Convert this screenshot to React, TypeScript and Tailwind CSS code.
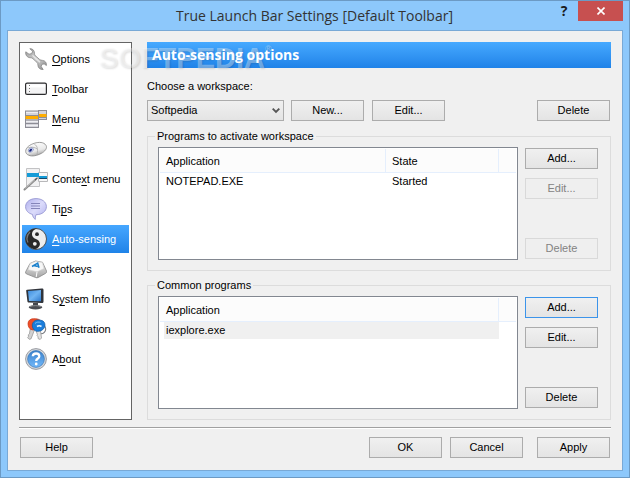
import React, { useState } from "react";
import clsx from "clsx";

interface NavItem {
  id: string;
  before: string;
  hotkey: string;
  after: string;
  icon: React.ReactNode;
}

const OptionsIcon = () => (
  <svg viewBox="0 0 22 22" className="h-[22px] w-[22px] shrink-0">
    <defs>
      <linearGradient id="steel" x1="0" y1="0" x2="1" y2="1">
        <stop offset="0" stopColor="#9b9b9b" />
        <stop offset="0.5" stopColor="#d2d2d2" />
        <stop offset="1" stopColor="#8a8a8a" />
      </linearGradient>
    </defs>
    <path
      d="M4.8.7 7.6 3.2 6.7 5.6 4 6.2.8 3.8C.2 7 2.2 9.6 5.2 9.7c1.2 0 1.9.2 2.7 1l4.2 3.8c.6.6.8 1.3.8 2.4.1 3 2.2 4.9 5.3 4.6l-2-2.9.7-2.3 2.3-.4 2.2 1.6c.4-2.6-1.2-4.9-3.9-5.1-1.3-.1-2.2-.3-3.1-1.100L10.200 7.600C9.600 7 9.500 6.300 9.500 5.400 9.400 2.300 7.600.5 4.800.7z"
      fill="url(#steel)"
      stroke="#858585"
      strokeWidth="0.8"
    />
    <path d="M7.5 7.4 15 14.3" stroke="#e9e9e9" strokeWidth="1.2" />
  </svg>
);

const ToolbarIcon = () => (
  <svg viewBox="0 0 22 22" className="h-[22px] w-[22px] shrink-0">
    <rect x="0.6" y="5.1" width="20.8" height="11.3" rx="1.5" fill="#f3f3f4" stroke="#2c2c2e" strokeWidth="1.2" />
    <path d="M1.8 6.4h18.4v3H1.8z" fill="#fff" />
    <path d="M4.5 7v8" stroke="#777" strokeDasharray="1 2" />
  </svg>
);

const MenuIcon = () => (
  <svg viewBox="0 0 22 22" className="h-[22px] w-[22px] shrink-0">
    <rect x="0.5" y="3" width="13" height="16.5" fill="#d4d4da" stroke="#8d8d96" />
    <path d="M1 7.500h12M1 12h12M1 15.500h12" stroke="#8d8d96" />
    <path d="M1 4.500h12M1 13.500h12M1 17.500h12" stroke="#efeff3" />
    <rect x="0.5" y="8" width="13" height="3" fill="#ffad00" />
    <rect x="13.5" y="2.5" width="8" height="9" fill="#d4d4da" stroke="#8d8d96" />
    <path d="M14 9.500h7" stroke="#8d8d96" />
    <rect x="14" y="6" width="7.5" height="3" fill="#ffad00" />
  </svg>
);

const MouseIcon = () => (
  <svg viewBox="0 0 22 22" className="h-[22px] w-[22px] shrink-0">
    <defs>
      <linearGradient id="shell" x1="0.3" y1="0" x2="0.7" y2="1">
        <stop offset="0" stopColor="#fff" />
        <stop offset="0.6" stopColor="#e9e9e9" />
        <stop offset="1" stopColor="#999" />
      </linearGradient>
    </defs>
    <path
      d="M.7 13.500C.5 9.500 5 6.600 9.500 5.200c4.300-1.300 9.300-1.300 11.500 2.100 1.700 3-1.300 6.300-4.700 8.100-3.800 2-9.300 3.500-12.600 1.800C1.900 16.500.8 15.300.7 13.500z"
      fill="url(#shell)"
      stroke="#858585"
      strokeWidth="0.8"
    />
    <path d="M8.500 5.700c3.300 1.200 5 4.700 3.500 10.800M2.500 10c4-1.500 7-.9 9.800 1" fill="none" stroke="#aaa" strokeWidth="0.8" />
    <ellipse cx="5.800" cy="12" rx="2.800" ry="2" fill="#cbd5f4" stroke="#6a78aa" strokeWidth="0.5" transform="rotate(-30 5.8 12)" />
    <ellipse cx="5.600" cy="12.200" rx="1" ry="1.700" fill="#111c79" transform="rotate(45 5.6 12.2)" />
  </svg>
);

const ContextIcon = () => (
  <svg viewBox="0 0 22 22" className="h-[22px] w-[22px] shrink-0 overflow-visible">
    <path d="M1.500.5h13v18h-13z" fill="#f1f1f2" stroke="#c2c2c4" />
    <path d="M13.500 4.500h9v9h-9z" fill="#f8f8f8" stroke="#b8b8ba" />
    <path d="M2 5h12v4H2zM14 8h8v2.500h-8z" fill="#159bd7" />
    <path d="M14 10.500h8" stroke="#174a6b" />
    <path d="M-.5 21.500 10.500 11.500" stroke="#8b8b8b" strokeWidth="2" strokeLinecap="round" />
    <path d="m10 12 2.500-2.200" stroke="#555" strokeWidth="1.2" />
    <path d="m0 20.500 10-9" stroke="#d8d8d8" strokeWidth="0.6" />
  </svg>
);

const TipsIcon = () => (
  <svg viewBox="0 0 22 22" className="h-[22px] w-[22px] shrink-0">
    <defs>
      <linearGradient id="bubble" x1="0" y1="0" x2="1" y2="1">
        <stop offset="0" stopColor="#b0b0ec" />
        <stop offset="0.5" stopColor="#dcdcfb" />
        <stop offset="1" stopColor="#b1b1ee" />
      </linearGradient>
    </defs>
    <path
      d="M11 .6C5 .6.6 4 .6 8.700c0 3.800 2.800 6.700 6.900 7.700.2 2.200 1.100 3.800 2.800 5-.2-1.700 0-3.200.7-4.700 6 0 10.400-3.400 10.400-8C21.400 4 17 .6 11 .6z"
      fill="url(#bubble)"
      stroke="#9998d3"
      strokeWidth="0.9"
    />
    <path d="M6 5.500h9M6 8h9M6 10.500h9" stroke="#8585b9" />
  </svg>
);

const SensingIcon = () => (
  <svg viewBox="0 0 22 22" className="h-[22px] w-[22px] shrink-0">
    <circle cx="11" cy="11" r="10.5" fill="#ededed" stroke="#444" strokeWidth="0.9" />
    <path d="M13 .8A10.300 10.300 0 1 0 8.500 21c3.600.3 6.300-1.900 6.400-5 .1-2.600-1.800-4-4-5C8.200 9.900 6.800 8.300 7 5.800 7.300 2.800 9.700.8 13 .8z" fill="#292929" />
    <path d="M5 4C1.600 7.300 1.500 11.500 3 14.500" fill="none" stroke="#777" strokeWidth="1.3" />
    <circle cx="12" cy="6.2" r="1.9" fill="#292929" />
    <circle cx="9.8" cy="15.8" r="1.9" fill="#f1f1f1" />
  </svg>
);

const HotkeysIcon = () => (
  <svg viewBox="0 0 22 22" className="h-[22px] w-[22px] shrink-0">
    <defs>
      <linearGradient id="key" x1="0" y1="0" x2="0" y2="1">
        <stop offset="0" stopColor="#f1f1f1" />
        <stop offset="1" stopColor="#a3a3a3" />
      </linearGradient>
    </defs>
    <path d="M5 5.500 10.500 3l7 1.300 4 8.700c.3 1.200-.1 1.800-1 2.400l-7.300 4.100c-.8.4-1.700.4-2.500.1L1.300 15.800c-.7-.4-.9-1-.7-1.900z" fill="url(#key)" stroke="#898989" strokeWidth="0.8" />
    <path d="M5.300 5.600 10.700 3.400l6.600 1.200 1.700 6-6.900 3.200-9-2.100z" fill="#f7f7f7" stroke="#d3d3d3" strokeWidth="0.6" />
    <path d="m12 14-.8 5" stroke="#fff" />
    <path d="m7 8.500 5.700-3.300 1.300 4.600M8.800 7.500l4 .9" fill="none" stroke="#187fcc" strokeWidth="1.5" />
  </svg>
);

const SystemIcon = () => (
  <svg viewBox="0 0 22 22" className="h-[22px] w-[22px] shrink-0">
    <defs>
      <linearGradient id="screen" x1="0" y1="0" x2="1" y2="1">
        <stop offset="0" stopColor="#3c8bdd" />
        <stop offset="0.5" stopColor="#70b4f2" />
        <stop offset="1" stopColor="#2e78cb" />
      </linearGradient>
    </defs>
    <path d="m2 1.700 14.500-1.200c1.300-.1 2 .3 2 1.500v11.500c0 1-.6 1.500-1.700 1.500L4 14.500c-1 0-1.500-.4-1.600-1.300L1.200 3c-.1-.8.1-1.200.8-1.300z" fill="#30343b" />
    <path d="M3 3 16 2v11.300L4 13z" fill="url(#screen)" />
    <path d="M8 15h5v3H8z" fill="#44474d" />
    <ellipse cx="10.5" cy="19.2" rx="6.8" ry="2.2" fill="#494c52" />
    <path d="M5 18.600c3-1.300 8-1.300 11 0" fill="none" stroke="#a3a5a9" strokeWidth="0.7" />
  </svg>
);

const KeysIcon = () => (
  <svg viewBox="0 0 22 22" className="h-[22px] w-[22px] shrink-0">
    <circle cx="16" cy="11" r="4.7" fill="none" stroke="#7b7e83" strokeWidth="1.1" />
    <path d="m5.200 11 4.300.9-3.500 9-1.800.4-1.600-1.600 1-1.500-.4-1.300 1.200-1z" fill="#d1d1d1" stroke="#8f8f8f" strokeWidth="0.7" />
    <path d="m11 12.500 4.300-1.200L16.500 20l-1.300 1.400-2-.7-.2-2-1-1 .4-1z" fill="#e3e3e3" stroke="#8f8f8f" strokeWidth="0.7" />
    <path d="M8.500.7C5.600.7 3 2.500 3 5.600 3 8.800 4.600 11.800 8 12l3.500-1.500L15 2.200C13.700 1 11 .6 8.500.7z" fill="#ef4e27" stroke="#c53417" strokeWidth="0.7" />
    <path d="M13 2C9.500 2 7 4.600 7.300 8c.3 2.700 2 4.700 4.500 5.300 2.800.4 6-.9 7.500-3.500 1.300-2.600.7-5.500-1.300-6.800C16.800 2.200 15 2 13 2z" fill="#1a7ddb" stroke="#0c59a5" strokeWidth="0.7" />
    <path d="M10 5.500c1.600-1.600 4-1.700 5.500-1" fill="none" stroke="#71bcf5" />
    <path d="M12 8.500c1.500-1 3-1 4.500 0" fill="none" stroke="#eef7ff" strokeWidth="1.7" />
  </svg>
);

const AboutIcon = () => (
  <svg viewBox="0 0 22 22" className="h-[22px] w-[22px] shrink-0">
    <defs>
      <linearGradient id="help" x1="0" y1="0" x2="0" y2="1">
        <stop offset="0" stopColor="#3b82cd" />
        <stop offset="1" stopColor="#71b8fa" />
      </linearGradient>
    </defs>
    <circle cx="11" cy="11" r="10.4" fill="#d9dbdf" stroke="#8e9299" strokeWidth="0.9" />
    <circle cx="11" cy="11" r="8.4" fill="url(#help)" stroke="#3e78b5" strokeWidth="0.7" />
    <path d="M7.800 8.200c.2-3.600 6.500-3.600 6.500 0 0 2.300-3.100 2.300-3.100 4.700" fill="none" stroke="#fff" strokeWidth="2.3" />
    <circle cx="11.2" cy="16" r="1.4" fill="#fff" />
  </svg>
);

const navItems: NavItem[] = [
  { id: "options", before: "", hotkey: "O", after: "ptions", icon: <OptionsIcon /> },
  { id: "toolbar", before: "", hotkey: "T", after: "oolbar", icon: <ToolbarIcon /> },
  { id: "menu", before: "", hotkey: "M", after: "enu", icon: <MenuIcon /> },
  { id: "mouse", before: "Mo", hotkey: "u", after: "se", icon: <MouseIcon /> },
  { id: "context", before: "Conte", hotkey: "x", after: "t menu", icon: <ContextIcon /> },
  { id: "tips", before: "Ti", hotkey: "p", after: "s", icon: <TipsIcon /> },
  { id: "sensing", before: "", hotkey: "A", after: "uto-sensing", icon: <SensingIcon /> },
  { id: "hotkeys", before: "", hotkey: "H", after: "otkeys", icon: <HotkeysIcon /> },
  { id: "system", before: "S", hotkey: "y", after: "stem Info", icon: <SystemIcon /> },
  { id: "registration", before: "", hotkey: "R", after: "egistration", icon: <KeysIcon /> },
  { id: "about", before: "A", hotkey: "b", after: "out", icon: <AboutIcon /> }
];

interface DialogButtonProps extends React.ButtonHTMLAttributes<HTMLButtonElement> {
  focused?: boolean;
}

function DialogButton({ focused, className, ...props }: DialogButtonProps) {
  return (
    <button
      type="button"
      className={clsx(
        "h-[21px] w-[73px] shrink-0 border text-center leading-[19px]",
        props.disabled
          ? "border-[#d9d9d9] bg-[#efefef] text-[#838383]"
          : "bg-linear-to-b from-[#f0f0f0] to-[#e4e4e4]",
        !props.disabled && (focused ? "border-[#3c94ea]" : "border-[#acacac]"),
        className
      )}
      {...props}
    />
  );
}

interface ProgramGroupProps {
  title: string;
  columns: string[];
  row: string[];
  highlighted?: boolean;
  locked?: boolean;
}

function ProgramGroup({ title, columns, row, highlighted, locked }: ProgramGroupProps) {
  return (
    <fieldset className="min-w-0 border border-[#dcdcdc] pr-3 pb-[10px] pl-[10px]">
      <legend className="-ml-[3px] h-[15px] px-[2px] leading-[15px]">{title}</legend>
      <div className="mt-[3px] flex gap-[7px]">
        <div className="h-[113px] min-w-0 flex-1 border border-[#828790] bg-white p-px">
          <table className="w-full table-fixed border-separate border-spacing-0 text-left">
            <colgroup>
              <col />
              {columns.length > 1 && <col className="w-[113px]" />}
              <col className="w-[17px]" />
            </colgroup>
            <thead>
              <tr className="h-6 bg-[#fcfcfc]">
                {columns.map((column) => (
                  <th key={column} className="border-r border-b border-[#e5effd] p-0 pl-[6px] font-normal">
                    {column}
                  </th>
                ))}
                <td className="border-b border-[#e5effd] p-0" />
              </tr>
            </thead>
            <tbody>
              <tr className="h-[17px]">
                {row.map((cell) => (
                  <td key={cell} className="p-0 pl-1 leading-[17px]">
                    <div className={clsx("px-[2px]", highlighted && "bg-[#f0f0f0]")}>{cell}</div>
                  </td>
                ))}
                <td className="p-0" />
              </tr>
            </tbody>
          </table>
        </div>
        <div className="flex flex-col gap-[9px] py-px">
          <DialogButton focused={highlighted}>Add...</DialogButton>
          <DialogButton disabled={locked}>Edit...</DialogButton>
          <DialogButton disabled={locked} className="mt-auto">
            Delete
          </DialogButton>
        </div>
      </div>
    </fieldset>
  );
}

export default function App() {
  const [selected, setSelected] = useState("sensing");

  return (
    <div className="flex min-h-screen flex-col border border-[#6c9ac4] bg-[#8dc8fb] px-[6px] pb-[6px] font-['Liberation_Sans',sans-serif] text-[11px] leading-[16px] text-black">
      {/* Title bar */}
      <header className="flex h-[29px] items-start">
        <h1 className="min-w-0 flex-1 truncate pt-1 pl-[72px] text-center font-['Open_Sans',sans-serif] text-[14px] leading-[22px] text-[#333]">
          True Launch Bar Settings [Default Toolbar]
        </h1>
        <button
          type="button"
          aria-label="Help topics"
          className="h-5 w-7 font-['Open_Sans',sans-serif] text-[14px] leading-5 font-bold text-[#1b1b1b]"
        >
          ?
        </button>
        <button type="button" aria-label="Close" className="flex h-5 w-[45px] items-center justify-center bg-[#c75050]">
          <svg viewBox="0 0 8 8" className="h-2 w-2">
            <path d="m.5.5 7 7m0-7-7 7" stroke="#fff" strokeWidth="1.6" />
          </svg>
        </button>
      </header>

      <main className="relative flex flex-1 flex-col border border-[#79a9d6] bg-[#f0f0f0] px-[11px] pt-[11px] pb-3">
        <div className="flex gap-[15px]">
          {/* Pages */}
          <nav className="flex w-[113px] shrink-0 flex-col gap-[2px] border border-[#646464] bg-white p-[2px]">
            {navItems.map((item) => (
              <button
                key={item.id}
                type="button"
                onClick={() => setSelected(item.id)}
                className={clsx(
                  "flex h-7 items-center gap-[5px] pl-[3px] text-left whitespace-nowrap",
                  item.id === selected && "bg-linear-to-b from-[#46a7ff] to-[#1f83e8] text-white"
                )}
              >
                {item.icon}
                <span>
                  {item.before}
                  <span className="underline underline-offset-2">{item.hotkey}</span>
                  {item.after}
                </span>
              </button>
            ))}
          </nav>

          {/* Auto-sensing page */}
          <section className="min-w-0 flex-1">
            <h2 className="h-[26px] bg-linear-to-b from-[#46a9ff] to-[#1f82e8] pl-[5px] font-['Open_Sans',sans-serif] text-[14px] leading-[26px] font-bold text-white">
              <span className="relative z-10">Auto-sensing options</span>
            </h2>
            <label htmlFor="workspace" className="mt-[10px] block">
              Choose a workspace:
            </label>
            <div className="mt-[6px] flex pr-px">
              <div className="relative w-[137px] shrink-0">
                <select
                  id="workspace"
                  className="block h-[21px] w-full appearance-none border border-[#acacac] bg-linear-to-b from-[#f0f0f0] to-[#e4e4e4] pl-[3px] leading-[19px]"
                >
                  <option>Softpedia</option>
                </select>
                <svg viewBox="0 0 8 6" className="pointer-events-none absolute top-2 right-1 h-[6px] w-2">
                  <path d="m.7.7 3.300 3.300L7.300.7" fill="none" stroke="#555" strokeWidth="1.9" />
                </svg>
              </div>
              <DialogButton className="ml-[7px]">New...</DialogButton>
              <DialogButton className="mr-auto ml-2">Edit...</DialogButton>
              <DialogButton>Delete</DialogButton>
            </div>

            <div className="mt-2 flex flex-col gap-[7px]">
              <ProgramGroup
                title="Programs to activate workspace"
                columns={["Application", "State"]}
                row={["NOTEPAD.EXE", "Started"]}
                locked
              />
              <ProgramGroup title="Common programs" columns={["Application"]} row={["iexplore.exe"]} highlighted />
            </div>
          </section>
        </div>

        <hr className="mt-[7px] h-[2px] border-t border-b border-t-[#a0a0a0] border-b-white" />
        <footer className="mt-2 flex px-px">
          <DialogButton className="mr-auto">Help</DialogButton>
          <DialogButton>OK</DialogButton>
          <DialogButton className="mr-[14px] ml-2">Cancel</DialogButton>
          <DialogButton>Apply</DialogButton>
        </footer>

        {/* Watermark */}
        <div className="pointer-events-none absolute top-3 left-[91px] flex font-['Liberation_Sans',sans-serif] text-[29px] leading-[30px] font-bold text-white/35 [text-shadow:1px_1px_2px_rgb(0_0_0/0.12)]">
          SOFTPEDIA<span className="text-[9px] leading-3">®</span>
        </div>
      </main>
    </div>
  );
}
